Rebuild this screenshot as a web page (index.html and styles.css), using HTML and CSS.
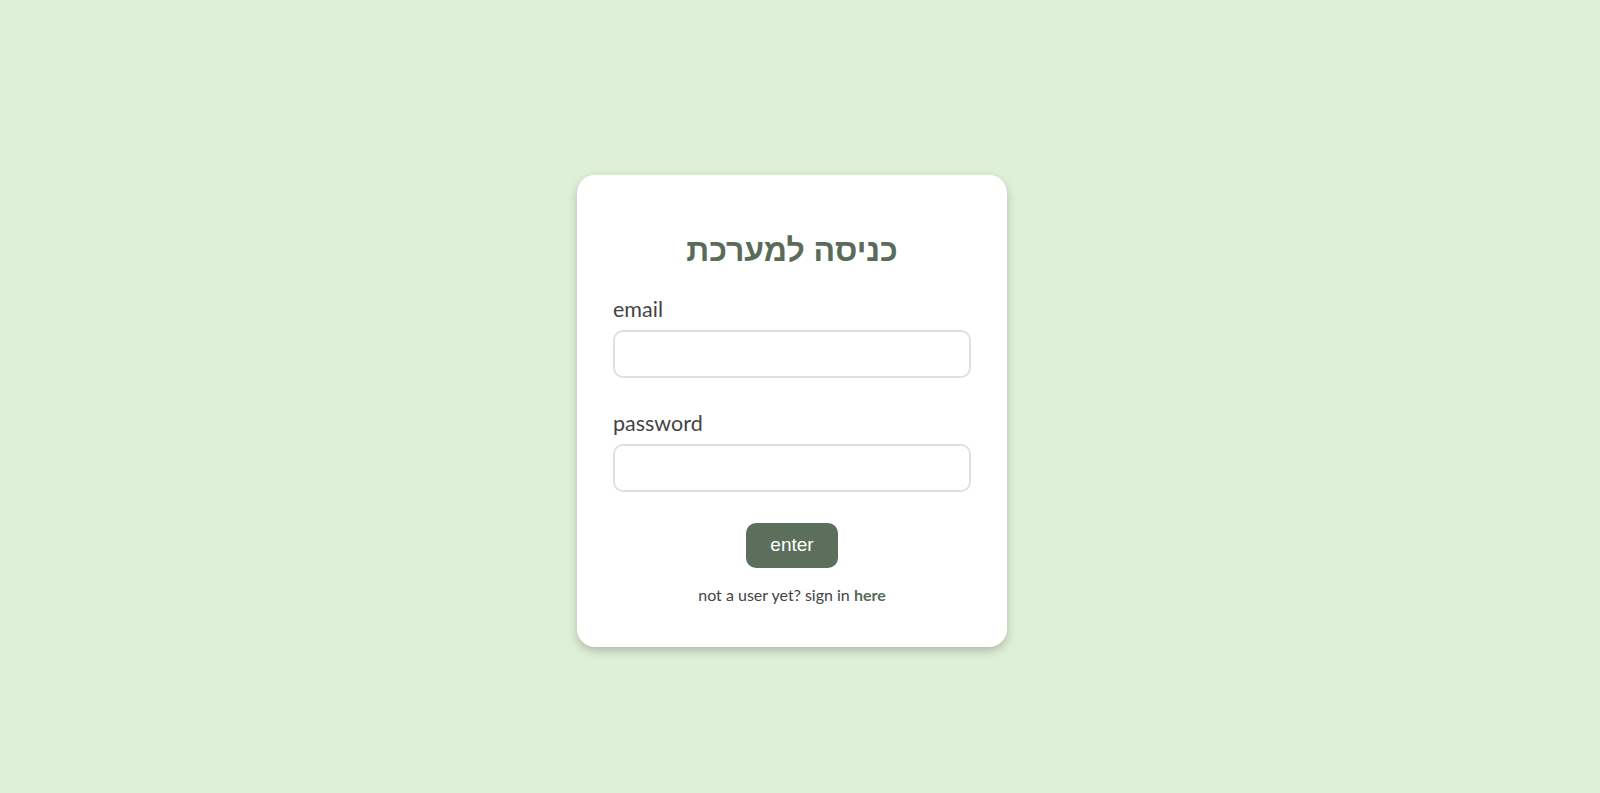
FILE: index.html
```html
<!DOCTYPE html>
<html lang="he">
<head>
<meta charset="utf-8">
<title>כניסה למערכת</title>
<link rel="stylesheet" href="styles.css">
</head>
<body>
<main class="page">
  <form class="card">
    <h1 class="title" dir="rtl">כניסה למערכת</h1>
    <div class="field">
      <label class="label" for="email">email</label>
      <input class="input" id="email" type="email">
    </div>
    <div class="field">
      <label class="label" for="password">password</label>
      <input class="input" id="password" type="password">
    </div>
    <div class="actions">
      <button class="btn" type="button">enter</button>
    </div>
    <p class="footer">not a user yet? sign in <a class="link" href="#">here</a></p>
  </form>
</main>
</body>
</html>
```
FILE: styles.css
```css
* { box-sizing: border-box; }
html, body { margin: 0; padding: 0; }
body {
  background: #dff0d8;
  font-family: Lato, "Liberation Sans", sans-serif;
  color: #444;
}
.page {
  min-height: 793px;
  display: flex;
  align-items: center;
  justify-content: center;
  padding: 28px 16px 0 0;
}
.card {
  width: 430px;
  background: #fff;
  border-radius: 18px;
  padding: 55px 36px 42px 36px;
  box-shadow: 0 4px 10px rgba(0, 0, 0, 0.22);
}
.title {
  margin: 0 0 27px 0;
  text-align: center;
  font-family: "Liberation Sans", Arial, sans-serif;
  font-weight: 700;
  font-size: 32px;
  line-height: 40px;
  color: #586c59;
}
.field { display: flex; flex-direction: column; }
.field + .field { margin-top: 33px; }
.label {
  display: block;
  font-size: 21.5px;
  line-height: 24px;
  margin-bottom: 9px;
  color: #444;
}
.input {
  display: block;
  width: 100%;
  height: 48px;
  border: 2px solid #e0e0e0;
  border-radius: 10px;
  background: #fff;
  outline: none;
  font-size: 16px;
  padding: 0 12px;
}
.actions {
  display: flex;
  justify-content: center;
  margin-top: 31px;
}
.btn {
  width: 92px;
  height: 45px;
  border: none;
  border-radius: 10px;
  background: #5b6f5c;
  color: #fff;
  font-family: "Liberation Sans", Arial, sans-serif;
  font-size: 19px;
  cursor: pointer;
}
.footer {
  margin: 17px 0 0 0;
  text-align: center;
  font-size: 16px;
  line-height: 20px;
  color: #444;
}
.link {
  color: #586c59;
  font-weight: 700;
  text-decoration: none;
}
```
